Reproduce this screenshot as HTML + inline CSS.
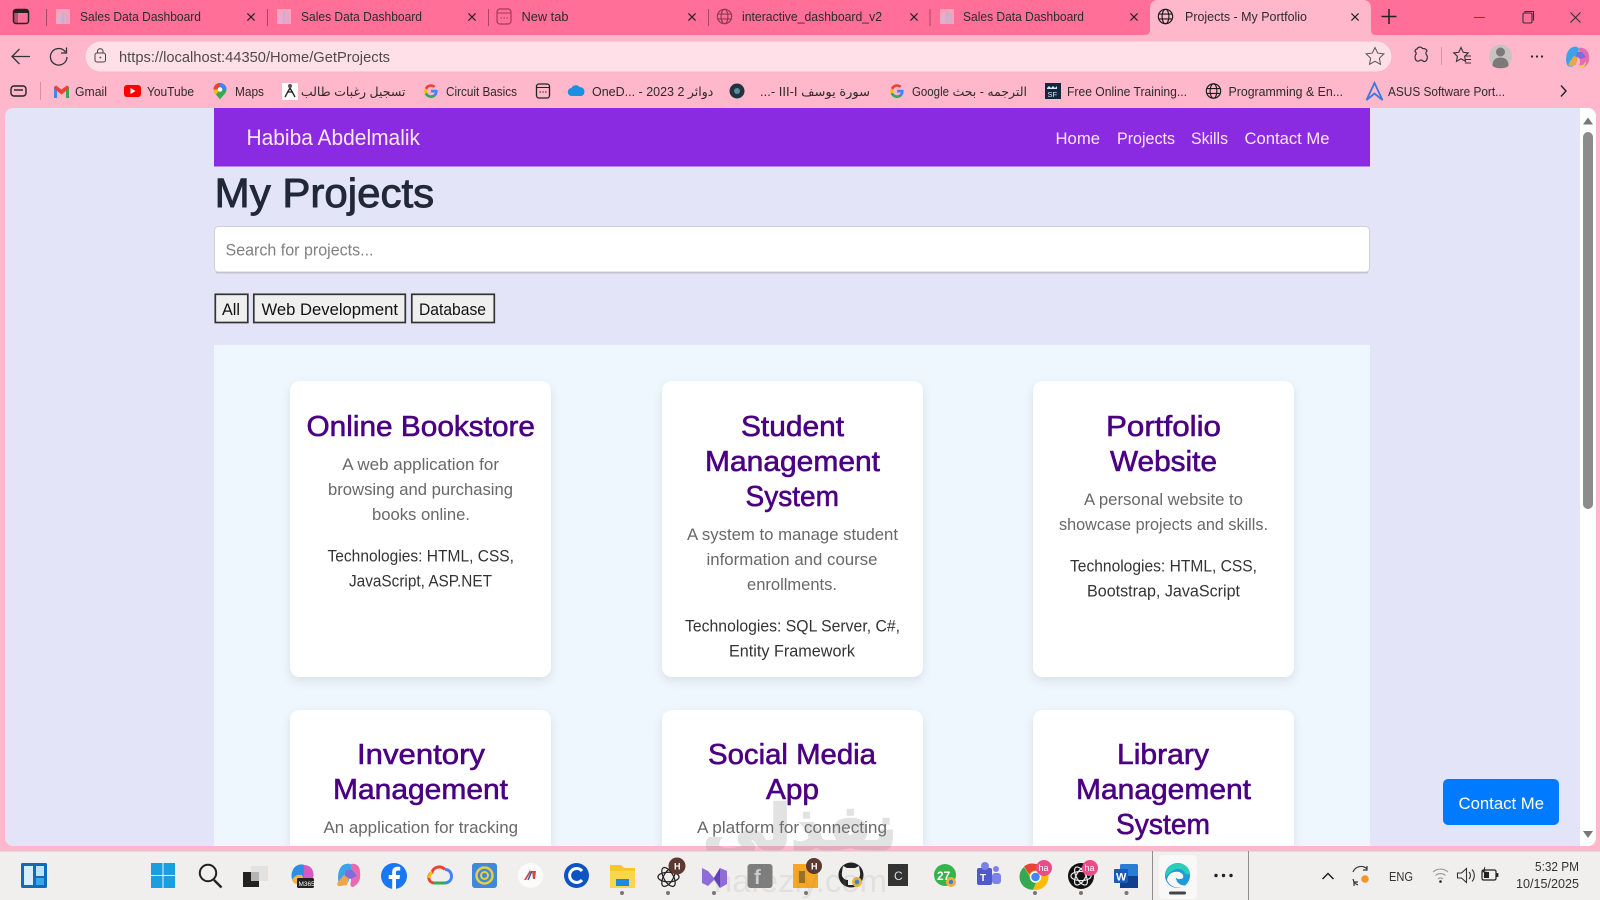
<!DOCTYPE html>
<html lang="en"><head><meta charset="utf-8"><title>Projects - My Portfolio</title>
<style>
html,body{margin:0;padding:0;width:1600px;height:900px;overflow:hidden;background:#f0efee}
svg{display:block;font-family:"Liberation Sans","DejaVu Sans",sans-serif}
.t{font-size:12.5px;fill:#2e2a2c}
.b{font-size:12.5px;fill:#2e2a2c}
.h{font-size:28.5px;fill:#4b0082;stroke:#4b0082;stroke-width:.6}
.p{font-size:16.5px;fill:#686868}
.k{font-size:16.5px;fill:#333}
.n{font-size:17px;fill:#fde6f6}
.s{font-size:17px;fill:#111}
.dot{fill:#777}
</style></head><body>
<svg width="1600" height="900" viewBox="0 0 1600 900" xmlns="http://www.w3.org/2000/svg">
<defs>
<clipPath id="vp"><rect x="5" y="108" width="1591" height="738" rx="8"/></clipPath>
<filter id="sh" x="-10%" y="-10%" width="120%" height="120%"><feDropShadow dx="0" dy="4" stdDeviation="5" flood-color="#000" flood-opacity=".09"/></filter>
<symbol id="sales" viewBox="0 0 14 16"><rect x="0" y="1" width="14" height="15" fill="#f7b9cd" opacity=".7"/><rect x="2" y="9" width="2.5" height="7" fill="#d2b4dc"/><rect x="6" y="3" width="2.5" height="13" fill="#c4b0dc"/><rect x="10" y="6" width="2.5" height="10" fill="#dba8c8"/></symbol>
<symbol id="globe" viewBox="0 0 18 18"><g fill="none" stroke="currentColor" stroke-width="1.2"><circle cx="9" cy="9" r="7.6"/><ellipse cx="9" cy="9" rx="3.6" ry="7.6"/><path d="M1.6 6.4h14.8M1.6 11.6h14.8"/></g></symbol>
<symbol id="x" viewBox="0 0 10 10"><path d="M1 1l8 8M9 1l-8 8" stroke="#222" stroke-width="1.3" fill="none"/></symbol>
<symbol id="gg" viewBox="0 0 16 16"><path d="M14.6 8.2c0-.5 0-1-.1-1.4H8v2.7h3.7c-.2.9-.6 1.6-1.4 2.1v1.7h2.2c1.3-1.2 2.1-3 2.1-5.1z" fill="#4285f4"/><path d="M8 15c1.9 0 3.400-.6 4.500-1.700l-2.200-1.700c-.6.4-1.400.7-2.300.7-1.800 0-3.300-1.200-3.800-2.800H1.900v1.800C3 13.500 5.300 15 8 15z" fill="#34a853"/><path d="M4.200 9.500c-.3-.9-.3-1.800 0-2.700V5H1.900c-.9 1.900-.9 4.100 0 6z" fill="#fbbc05"/><path d="M8 3.900c1 0 1.900.3 2.600 1l1.900-1.900C11.400 1.900 9.800 1.200 8 1.200 5.300 1.200 3 2.700 1.900 5l2.300 1.800C4.700 5.100 6.200 3.900 8 3.900z" fill="#ea4335"/></symbol>
<symbol id="gpt" viewBox="0 0 24 24"><g fill="none" stroke="currentColor" stroke-width="1.300"><ellipse cx="12" cy="12" rx="11" ry="5" /><ellipse cx="12" cy="12" rx="11" ry="5" transform="rotate(60 12 12)"/><ellipse cx="12" cy="12" rx="11" ry="5" transform="rotate(120 12 12)"/></g></symbol>
</defs>

<!-- chrome backgrounds -->
<rect width="1600" height="36" fill="#ff6f97"/>
<rect y="35" width="1600" height="816" fill="#ffb7cc"/>
<path d="M1145 35c4 0 5-2 5-6V8c0-5 3-8 8-8h205c5 0 8 3 8 8v21c0 4 1 6 5 6z" fill="#ffb7cc"/>

<!-- tab strip -->
<rect x="13.500" y="9.500" width="15" height="14" rx="2.500" fill="none" stroke="#222" stroke-width="1.500"/><rect x="14" y="10" width="14" height="3" fill="#222"/><rect x="14" y="10" width="4" height="13" fill="#222" opacity=".35"/>
<path d="M46.500 9v17M267.500 9v17M488.500 9v17M708.500 9v17M930 9v17" stroke="#a8475f" stroke-width="1"/>
<use href="#sales" x="56" y="8" width="14" height="16"/><use href="#sales" x="277" y="8" width="14" height="16"/><use href="#sales" x="940" y="8" width="14" height="16"/>
<rect x="497" y="9" width="14" height="15" rx="3" fill="none" stroke="#a23b5a" stroke-width="1.200"/><path d="M497 13h14" stroke="#a23b5a"/><path d="M500.500 18h1.500M503.500 18h1.500M506.500 18h1.500" stroke="#a23b5a"/>
<use href="#globe" x="716" y="8" width="17" height="17" color="#8a3a52"/><use href="#globe" x="1157" y="8" width="17" height="17" color="#1a1a1a"/>
<text class="t" x="80" y="21" textLength="121" lengthAdjust="spacingAndGlyphs">Sales Data Dashboard</text>
<text class="t" x="301" y="21" textLength="121" lengthAdjust="spacingAndGlyphs">Sales Data Dashboard</text>
<text class="t" x="521.500" y="21" textLength="47" lengthAdjust="spacingAndGlyphs">New tab</text>
<text class="t" x="742" y="21" textLength="140" lengthAdjust="spacingAndGlyphs">interactive_dashboard_v2</text>
<text class="t" x="963" y="21" textLength="121" lengthAdjust="spacingAndGlyphs">Sales Data Dashboard</text>
<text class="t" x="1185" y="21" textLength="122" lengthAdjust="spacingAndGlyphs">Projects - My Portfolio</text>
<use href="#x" x="246.500" y="12.500" width="9" height="9"/><use href="#x" x="467.500" y="12.500" width="9" height="9"/><use href="#x" x="687.500" y="12.500" width="9" height="9"/><use href="#x" x="909.500" y="12.500" width="9" height="9"/><use href="#x" x="1129.500" y="12.500" width="9" height="9"/><use href="#x" x="1350.500" y="12.500" width="9" height="9"/>
<path d="M1389 9v15M1381.500 16.500h15" stroke="#222" stroke-width="1.500"/>
<path d="M1474 17.500h11" stroke="#553" stroke-width="1.100"/>
<rect x="1523" y="13" width="9" height="10" rx="1.500" fill="none" stroke="#333" stroke-width="1.100"/><path d="M1525 13v-1.500h8.500v9" fill="none" stroke="#333" stroke-width="1.100"/>
<path d="M1570.500 12.500l10 10M1580.500 12.500l-10 10" stroke="#333" stroke-width="1.100"/>

<!-- toolbar -->
<path d="M30 56.500H12M19.500 49l-7.500 7.500 7.500 7.500" fill="none" stroke="#333" stroke-width="1.300"/>
<path d="M65.500 52a8.300 8.300 0 1 0 1.500 5M66.500 47.500v5.500h-5.500" fill="none" stroke="#333" stroke-width="1.300"/>
<rect x="85" y="41" width="1307" height="31" rx="15.500" fill="#ffe0e8" stroke="#f2b9c8"/>
<rect x="95" y="53" width="10.500" height="9" rx="2" fill="none" stroke="#444" stroke-width="1"/><path d="M97.500 53v-2a2.800 2.800 0 0 1 5.500 0v2" fill="none" stroke="#444" stroke-width="1"/><circle cx="100.300" cy="57.500" r=".9" fill="#444"/>
<text x="119" y="62" font-size="15" fill="#4f4a4c" textLength="271" lengthAdjust="spacingAndGlyphs">https://localhost:44350/Home/GetProjects</text>
<path d="M1375 47.500l2.700 5.600 6.200.8-4.500 4.300 1.100 6.100-5.500-3-5.500 3 1.100-6.100-4.500-4.300 6.200-.8z" fill="none" stroke="#555" stroke-width="1"/>
<path d="M1417 49.500a3 3 0 0 1 5.500-1c2 0 4 .5 4.500 2.500-1.500 1-1.500 3 0 4.500 1 2 0 5-2 6-2 .5-2.500-1.500-4-1.500s-2 2-4 1c-2-1-2.500-4-1.500-6 1-1 1-2.500-.5-3.500.2-1.500 1-2.500 2-2.500z" fill="none" stroke="#333" stroke-width="1.200"/>
<path d="M1441.500 47v18" stroke="#d990a6"/>
<path d="M1461 47.500l2.200 4.800 5 .6-3.600 3.400.9 5-4.500-2.500-4.500 2.500.9-5-3.600-3.400 5-.6z" fill="none" stroke="#333" stroke-width="1.100"/><path d="M1465 56h6M1465 59.500h6M1465 63h6" stroke="#333" stroke-width="1"/>
<ellipse cx="1500.500" cy="56.500" rx="11.500" ry="12" fill="#c9c2c3"/><circle cx="1500.500" cy="52" r="4.500" fill="#7d797a"/><path d="M1492.500 66c0-6 3-8.500 8-8.500s8 2.500 8 8.500c-4 3-12 3-16 0z" fill="#7d797a"/>
<circle cx="1532" cy="56.500" r="1.100" fill="#222"/><circle cx="1537" cy="56.500" r="1.100" fill="#222"/><circle cx="1542" cy="56.500" r="1.100" fill="#222"/>
<path d="M1571 48c3-2 7-2 8 1l-3 13c-1 4-5 6-8 4-3-3-3-14 3-18z" fill="#3ca3e8"/><path d="M1579 48c5-1 9 2 10 7 1 6-1 11-7 13-3 0-3-3-2-5z" fill="#e96ab1"/><path d="M1572 66c-3 1-4-1-3-3l5-7 4 2-2 7z" fill="#f0a54a"/><path d="M1577 52h5l4 5-6 2-4-3z" fill="#7f6be0"/><path d="M1578 66l5-1 3-4c0 4-2 7-6 7z" fill="#f5cf4a"/>

<!-- bookmarks -->
<rect x="11" y="86" width="15" height="10" rx="3" fill="none" stroke="#222" stroke-width="1.400"/><path d="M14 90h9" stroke="#222" stroke-width="1.400"/>
<path d="M40.500 82v18" stroke="#d990a6"/>
<path d="M54 87v11h3v-7l4.500 3.500 4.500-3.500v7h3V87l-2-1.500-5.500 4-5.500-4z" fill="#ea4335"/><path d="M54 98h3v-7l-3-3z" fill="#4285f4"/><path d="M66 98h3V88l-3 3z" fill="#34a853"/>
<text class="b" x="75" y="96" textLength="32" lengthAdjust="spacingAndGlyphs">Gmail</text>
<rect x="124" y="85" width="17" height="12" rx="3" fill="#f00"/><path d="M130.500 88v6l5-3z" fill="#fff"/>
<text class="b" x="147" y="96" textLength="47" lengthAdjust="spacingAndGlyphs">YouTube</text>
<path d="M220 83a6.500 6.500 0 0 1 6.500 6.500c0 4-4 6-6.500 10-2.500-4-6.500-6-6.500-10A6.500 6.500 0 0 1 220 83z" fill="#34a853"/><path d="M220 83a6.500 6.500 0 0 1 6.500 6.500l-6.500 0z" fill="#4285f4"/><path d="M213.500 89.500A6.500 6.500 0 0 1 220 83v6.500z" fill="#ea4335"/><path d="M213.500 89.500c0 2 1 3.500 2.500 5l4-5z" fill="#fbbc05"/><circle cx="220" cy="89.500" r="2.300" fill="#fff"/>
<text class="b" x="235" y="96" textLength="29" lengthAdjust="spacingAndGlyphs">Maps</text>
<rect x="282" y="83" width="16" height="17" fill="#fff"/><circle cx="290" cy="86" r="2" fill="#555"/><path d="M290 88l-5 9M290 88l5 9M287 92h6" stroke="#222" stroke-width="1.300" fill="none"/>
<text class="b" x="405.500" y="96" text-anchor="end">تسجيل رغبات طالب</text>
<use href="#gg" x="423" y="83" width="16" height="16"/>
<text class="b" x="446" y="96" textLength="71" lengthAdjust="spacingAndGlyphs">Circuit Basics</text>
<rect x="536.500" y="84" width="13" height="14" rx="2.500" fill="none" stroke="#222" stroke-width="1.300"/><path d="M536.500 87.500h13M539.500 92h1.500M542.300 92h1.500M545 92h1.500" stroke="#222"/>
<path d="M572 96a4 4 0 0 1-.5-8c1-3 6-4 8-1 3 0 5 2 5 4.500S583 96 581 96z" fill="#1b8fe0"/>
<text class="b" x="592" y="96">OneD... - دوائر 2 2023</text>
<circle cx="737" cy="91" r="7.500" fill="#20343f"/><circle cx="737" cy="91" r="3" fill="#5d8a9c"/>
<text class="b" x="760" y="96" textLength="110" lengthAdjust="spacingAndGlyphs">...- III-I سورة يوسف</text>
<use href="#gg" x="889" y="83" width="16" height="16"/>
<text class="b" x="912" y="96" textLength="37" lengthAdjust="spacingAndGlyphs">Google</text>
<text class="b" x="1027" y="96" style="direction:rtl;text-anchor:start">الترجمه - بحث</text>
<rect x="1045" y="83" width="16" height="16" fill="#10283f"/><text x="1047.500" y="97" font-size="7.500" fill="#dfe6ee">SF</text><path d="M1047 88l2-2 2 2 2-2 2 2 2-2v3h-10z" fill="#dfe6ee"/>
<text class="b" x="1067" y="96" textLength="120" lengthAdjust="spacingAndGlyphs">Free Online Training...</text>
<use href="#globe" x="1205" y="82.500" width="17" height="17" color="#1a1a1a"/>
<text class="b" x="1228.500" y="96" textLength="114.500" lengthAdjust="spacingAndGlyphs">Programming &amp; En...</text>
<path d="M1374.500 83l-8 17 8-6.500 8 6.500z" fill="none" stroke="#3b78e0" stroke-width="1.800"/>
<text class="b" x="1388" y="96" textLength="117" lengthAdjust="spacingAndGlyphs">ASUS Software Port...</text>
<path d="M1561 85.500l5 5.500-5 5.500" fill="none" stroke="#222" stroke-width="1.400"/>

<!-- page viewport -->
<g clip-path="url(#vp)">
<rect x="5" y="108" width="1591" height="738" fill="#e4e4f8"/>
<rect x="1580" y="108" width="16" height="738" fill="#fff"/>
<rect x="1583" y="132" width="10" height="377" rx="5" fill="#8c8c8c"/>
<path d="M1588 117.500l5 7h-10z" fill="#777"/><path d="M1588 838l5-7h-10z" fill="#777"/>

<rect x="214" y="108" width="1156" height="58.500" fill="#8a2be2"/>
<text x="246.500" y="145" font-size="22" fill="#fde6f6" textLength="173.500" lengthAdjust="spacingAndGlyphs">Habiba Abdelmalik</text>
<text class="n" x="1055.500" y="144" textLength="44.500" lengthAdjust="spacingAndGlyphs">Home</text>
<text class="n" x="1117" y="144" textLength="58" lengthAdjust="spacingAndGlyphs">Projects</text>
<text class="n" x="1191" y="144" textLength="37" lengthAdjust="spacingAndGlyphs">Skills</text>
<text class="n" x="1244.500" y="144" textLength="85" lengthAdjust="spacingAndGlyphs">Contact Me</text>

<text x="214.700" y="207" font-size="41" fill="#212837" stroke="#212837" stroke-width=".9" textLength="219.500" lengthAdjust="spacingAndGlyphs">My Projects</text>

<rect x="214.500" y="226.500" width="1155" height="45.500" rx="4" fill="#fff" stroke="#cfcfd5"/>
<path d="M216 272.800h1152" stroke="#bdbdc4" stroke-width="1.200"/>
<text x="225.500" y="255.500" font-size="17" fill="#808080" textLength="148" lengthAdjust="spacingAndGlyphs">Search for projects...</text>

<g fill="#efefef" stroke="#333" stroke-width="1.700"><rect x="215.300" y="294.300" width="32.500" height="28.200"/><rect x="253.800" y="294.300" width="151.500" height="28.200"/><rect x="411.800" y="294.300" width="82.500" height="28.200"/></g>
<text class="s" x="222" y="315" textLength="18" lengthAdjust="spacingAndGlyphs">All</text>
<text class="s" x="261.500" y="315" textLength="136.500" lengthAdjust="spacingAndGlyphs">Web Development</text>
<text class="s" x="419" y="315" textLength="67" lengthAdjust="spacingAndGlyphs">Database</text>

<rect x="214" y="345" width="1156" height="501" fill="#eef6fe"/>

<g fill="#fff" filter="url(#sh)">
<rect x="290" y="381" width="261" height="296" rx="10"/><rect x="662" y="381" width="261" height="296" rx="10"/><rect x="1033" y="381" width="261" height="296" rx="10"/>
<rect x="290" y="710" width="261" height="170" rx="10"/><rect x="662" y="710" width="261" height="170" rx="10"/><rect x="1033" y="710" width="261" height="170" rx="10"/>
</g>

<!-- card 1 -->
<text class="h" x="306.500" y="436" textLength="228.500" lengthAdjust="spacingAndGlyphs">Online Bookstore</text>
<text class="p" x="342.300" y="470" textLength="156.700" lengthAdjust="spacingAndGlyphs">A web application for</text>
<text class="p" x="328" y="495" textLength="185" lengthAdjust="spacingAndGlyphs">browsing and purchasing</text>
<text class="p" x="372" y="520" textLength="98" lengthAdjust="spacingAndGlyphs">books online.</text>
<text class="k" x="327.500" y="561.300" textLength="186.500" lengthAdjust="spacingAndGlyphs">Technologies: HTML, CSS,</text>
<text class="k" x="349" y="586.300" textLength="143" lengthAdjust="spacingAndGlyphs">JavaScript, ASP.NET</text>
<!-- card 2 -->
<text class="h" x="741" y="436" textLength="103" lengthAdjust="spacingAndGlyphs">Student</text>
<text class="h" x="705" y="471" textLength="175" lengthAdjust="spacingAndGlyphs">Management</text>
<text class="h" x="745.500" y="506" textLength="93.500" lengthAdjust="spacingAndGlyphs">System</text>
<text class="p" x="687" y="540" textLength="211" lengthAdjust="spacingAndGlyphs">A system to manage student</text>
<text class="p" x="706.500" y="565" textLength="171" lengthAdjust="spacingAndGlyphs">information and course</text>
<text class="p" x="747" y="590" textLength="90" lengthAdjust="spacingAndGlyphs">enrollments.</text>
<text class="k" x="685" y="631.300" textLength="215" lengthAdjust="spacingAndGlyphs">Technologies: SQL Server, C#,</text>
<text class="k" x="729" y="656.300" textLength="126" lengthAdjust="spacingAndGlyphs">Entity Framework</text>
<!-- card 3 -->
<text class="h" x="1106" y="436" textLength="115" lengthAdjust="spacingAndGlyphs">Portfolio</text>
<text class="h" x="1110" y="471" textLength="107" lengthAdjust="spacingAndGlyphs">Website</text>
<text class="p" x="1084" y="505" textLength="159" lengthAdjust="spacingAndGlyphs">A personal website to</text>
<text class="p" x="1059" y="530" textLength="209" lengthAdjust="spacingAndGlyphs">showcase projects and skills.</text>
<text class="k" x="1070" y="571.300" textLength="187" lengthAdjust="spacingAndGlyphs">Technologies: HTML, CSS,</text>
<text class="k" x="1087" y="596.300" textLength="153" lengthAdjust="spacingAndGlyphs">Bootstrap, JavaScript</text>
<!-- card 4 -->
<text class="h" x="357" y="764" textLength="128" lengthAdjust="spacingAndGlyphs">Inventory</text>
<text class="h" x="333" y="799" textLength="175" lengthAdjust="spacingAndGlyphs">Management</text>
<text class="p" x="323.500" y="833" textLength="194.500" lengthAdjust="spacingAndGlyphs">An application for tracking</text>
<text class="p" x="330" y="858" textLength="180" lengthAdjust="spacingAndGlyphs">inventory levels and orders</text>
<!-- card 5 -->
<text class="h" x="708" y="764" textLength="168" lengthAdjust="spacingAndGlyphs">Social Media</text>
<text class="h" x="766" y="799" textLength="53" lengthAdjust="spacingAndGlyphs">App</text>
<text class="p" x="697" y="833" textLength="190" lengthAdjust="spacingAndGlyphs">A platform for connecting</text>
<text class="p" x="705" y="858" textLength="175" lengthAdjust="spacingAndGlyphs">users and sharing content</text>
<!-- card 6 -->
<text class="h" x="1117" y="764" textLength="92" lengthAdjust="spacingAndGlyphs">Library</text>
<text class="h" x="1076" y="799" textLength="175" lengthAdjust="spacingAndGlyphs">Management</text>
<text class="h" x="1116" y="834" textLength="94" lengthAdjust="spacingAndGlyphs">System</text>

<rect x="1443" y="779" width="116" height="46" rx="5" fill="#007bff"/>
<text x="1458.500" y="809" font-size="17" fill="#fff" textLength="85.500" lengthAdjust="spacingAndGlyphs">Contact Me</text>
</g>

<!-- watermark -->
<text x="703" y="849" font-size="62" font-weight="bold" fill="#8a8a8a" stroke="#8a8a8a" stroke-width="2.500" opacity=".24" textLength="194" lengthAdjust="spacingAndGlyphs" style="font-family:'DejaVu Sans',sans-serif">نفذلي</text>

<!-- taskbar -->
<rect y="851" width="1600" height="49" fill="#f0efee"/>
<path d="M0 851h1600" stroke="#d9c6cc"/>
<path d="M1152.500 851v49M1248.500 851v49" stroke="#8d8d8d" stroke-width="1"/>
<rect x="1159" y="855" width="38" height="44" rx="4" fill="#f8f8f8"/>

<rect x="21" y="863" width="26" height="25" rx="1.500" fill="#0f6cbd"/><rect x="24" y="866" width="9" height="19" fill="#d8eefc"/><rect x="36" y="866" width="8" height="10" fill="#bfe3fa"/><rect x="36" y="878" width="8" height="7" fill="#35a7ee"/>
<g fill="#1b9de2"><rect x="151" y="863" width="11.500" height="12"/><rect x="163.500" y="863" width="11.500" height="12"/><rect x="151" y="876" width="11.500" height="12"/><rect x="163.500" y="876" width="11.500" height="12"/></g>
<circle cx="208" cy="873" r="8.200" fill="none" stroke="#222" stroke-width="2"/><path d="M214 880l7.500 7.500" stroke="#222" stroke-width="2.400"/>
<rect x="243" y="872" width="16" height="15" fill="#222"/><rect x="251" y="866" width="17" height="15" fill="#e2e2e2"/><rect x="251" y="872" width="8" height="9" fill="#b5b5b5"/>
<path d="M296 866c5-3 10-2 11 3l-3 11c-1 4-8 5-11 1-3-5-1-12 3-15z" fill="#2f8de4"/><path d="M304 865c5 0 9 3 9.500 9 .3 5-3 8-7 9l-3-1z" fill="#d75ac1"/><path d="M292 880c2-4 6-6 10-5l2 5-5 4c-3 1-6-1-7-4z" fill="#f5b342"/><rect x="297" y="878" width="17" height="10" rx="1.500" fill="#222"/><text x="298.500" y="886" font-size="6.500" fill="#fff">M365</text>
<path d="M343 865c4-2 8-2 9 1l-3 14c-1 4-6 7-9 5-3-3-3-16 3-20z" fill="#3ca3e8"/><path d="M351 864c5-1 9 2 9 8 1 7-1 12-7 15-3 0-3-3-2-6z" fill="#e96ab1"/><path d="M340 886c-2 1-4-2-2-4l6-7 5 2-2 8z" fill="#f0a54a"/><path d="M346 870h6l5 6-7 3-5-3z" fill="#7f6be0"/>
<circle cx="394" cy="876" r="13" fill="#1877f2"/><path d="M396 889v-10h3.500l.6-4H396v-2.500c0-1.200.5-2 2-2h2.200v-3.500c-3.800-.7-8 0-8 5V875h-3.500v4h3.500v10z" fill="#fff"/>
<path d="M434 883a5.500 5.500 0 0 1-2-10.500c1-5 8-8 13-3" fill="none" stroke="#ea4335" stroke-width="3"/><path d="M434 883h11" stroke="#34a853" stroke-width="3"/><path d="M445 883c3 0 6.500-2.500 6.500-6.500s-2.500-7-6.500-7" fill="none" stroke="#4285f4" stroke-width="3"/><path d="M429 878c.5-3 1.500-5 3-6" stroke="#fbbc05" stroke-width="3" fill="none"/>
<rect x="472" y="863" width="25" height="25" rx="3" fill="#4088d8"/><circle cx="484.500" cy="875.500" r="8" fill="none" stroke="#e8cf3d" stroke-width="2.500"/><circle cx="484.500" cy="875.500" r="3.500" fill="none" stroke="#e8cf3d" stroke-width="2"/>
<circle cx="530.500" cy="875.500" r="12.500" fill="#fbfbfb"/><path d="M524 880l6-10 1 2-5 8zM532 871h4l-1 8-2 0z" fill="#d44"/><path d="M528 880l4-9" stroke="#2866b8" stroke-width="1.500"/>
<circle cx="576.500" cy="875.500" r="12.500" fill="#0c54c2"/><path d="M582 871a7 7 0 1 0 0 9" fill="none" stroke="#fff" stroke-width="3"/>
<path d="M610 865h11l3 3h11v20h-25z" fill="#f7c62f"/><rect x="610" y="871" width="25" height="17" fill="#fbd64b"/><rect x="616" y="879" width="13" height="7" fill="#1b8ae0"/>
<use href="#gpt" x="657" y="865" width="23" height="24" color="#222"/><circle cx="677" cy="866" r="8.500" fill="#5c3a33"/><text x="674" y="869.500" font-size="9" font-weight="bold" fill="#fff">H</text>
<path d="M702 868l6 3 6 7 6-10 7 3v13l-7 4-6-8-6 6-6-3z" fill="#8f6cd8"/><path d="M714 878l6-10v20z" fill="#5c3bbd"/>
<rect x="747.500" y="864" width="25" height="24" rx="3" fill="#7d7d7d"/><text x="754" y="884" font-size="20" font-weight="bold" fill="#cfcfcf">f</text>
<rect x="793" y="864" width="25" height="24" fill="#f7a823"/><circle cx="814" cy="866" r="8" fill="#5c3a33"/><text x="811" y="869.500" font-size="9" font-weight="bold" fill="#fff">H</text><rect x="799" y="871" width="6" height="12" fill="#5a4a20" opacity=".6"/>
<circle cx="851" cy="875" r="12.500" fill="#222"/><path d="M842 872l1-6 4 2h8l4-2 1 6c1 5-2 8-6 8v5h-6v-5c-4 0-7-3-6-8z" fill="#f0efee"/><circle cx="857" cy="882" r="5" fill="#e8b23c"/><circle cx="857" cy="882" r="2.300" fill="#3a7fe0"/>
<rect x="888" y="864" width="20" height="22" fill="#333"/><text x="894" y="880" font-size="12" fill="#ddd">C</text>
<circle cx="945" cy="875" r="11" fill="#34b44a"/><text x="937" y="880" font-size="12" font-weight="bold" fill="#fff">27</text><circle cx="951" cy="882" r="5" fill="#e8b23c"/><circle cx="951" cy="882" r="2.200" fill="#3a7fe0"/>
<rect x="977" y="868" width="15" height="17" rx="2" fill="#5059c9"/><circle cx="985" cy="866" r="4" fill="#7b83eb"/><circle cx="996" cy="869" r="3" fill="#7b83eb"/><rect x="992" y="873" width="9" height="11" rx="3" fill="#7b83eb"/><text x="980" y="881" font-size="10" font-weight="bold" fill="#fff">T</text>
<circle cx="1035.500" cy="877" r="13" fill="#fbbc05"/><path d="M1035.500 864a13 13 0 0 1 11.300 6.500H1035.500a6.500 6.500 0 0 0-6 4l-5.500-8a13 13 0 0 1 11.500-2.500z" fill="#ea4335"/><path d="M1024 867l6 10a6.500 6.500 0 0 0 7 3l-4 9.800A13 13 0 0 1 1024 867z" fill="#34a853"/><circle cx="1035.500" cy="877" r="5" fill="#4285f4" stroke="#fff" stroke-width="1.500"/><circle cx="1044" cy="868" r="8" fill="#ea4c89"/><text x="1038.500" y="871" font-size="9" fill="#fff">ha</text>
<circle cx="1081" cy="876" r="13" fill="#111"/><use href="#gpt" x="1070" y="865" width="22" height="22" color="#eee"/><circle cx="1090" cy="868" r="8" fill="#ea4c89"/><text x="1084.500" y="871" font-size="9" fill="#fff">ha</text>
<rect x="1120" y="864" width="18" height="24" rx="1.500" fill="#2b7cd3"/><rect x="1120" y="876" width="18" height="12" fill="#103f91"/><rect x="1114" y="869" width="14" height="14" rx="1" fill="#185abd"/><text x="1116" y="880.500" font-size="11" font-weight="bold" fill="#fff">W</text>
<circle cx="1177.500" cy="875.500" r="12.500" fill="#1f9bd8"/><path d="M1167 880c1-7 7-9 12-8 3 1 5 3 4 6-3 2-6 1-7-.5 0 5 4 8 9 8-3 3-14 4-18-5.500z" fill="#f8f8f8"/><path d="M1166 877c-1-8 5-14 12-14 6 0 11 4 12 10-1 2-3 2-5 0-2-4-7-5-11-3-4 2-6 4-8 7z" fill="#2ecdb8"/>
<rect x="1169" y="891.500" width="17" height="3" rx="1.500" fill="#444"/>
<circle cx="1216" cy="875.500" r="1.700" fill="#222"/><circle cx="1223.500" cy="875.500" r="1.700" fill="#222"/><circle cx="1231" cy="875.500" r="1.700" fill="#222"/>
<g class="dot"><circle cx="622" cy="893" r="2"/><circle cx="668" cy="893" r="2"/><circle cx="714" cy="893" r="2"/><circle cx="806" cy="893" r="2"/><circle cx="1035" cy="893" r="2"/><circle cx="1081" cy="893" r="2"/><circle cx="1126.500" cy="893" r="2"/></g>

<text x="714" y="892" font-size="32" fill="#8a8a8a" opacity=".14" textLength="173" lengthAdjust="spacingAndGlyphs">nafezly.com</text>

<!-- tray -->
<path d="M1322.500 879l5.500-5.500 5.500 5.500" fill="none" stroke="#222" stroke-width="1.500"/>
<path d="M1353 872a8.500 8.500 0 0 1 14-3M1367 866v4h-4M1353 879a8 8 0 0 0 5 6M1354 886v-4h4" fill="none" stroke="#333" stroke-width="1.200"/><circle cx="1365" cy="879" r="3.800" fill="#f7941d"/>
<text x="1389" y="881" font-size="12.500" fill="#333" textLength="24" lengthAdjust="spacingAndGlyphs">ENG</text>
<path d="M1433 872a11 11 0 0 1 15 0M1435.500 875.500a7.500 7.500 0 0 1 10 0M1438 879a3.500 3.500 0 0 1 5 0" fill="none" stroke="#9a9a9a" stroke-width="1.100"/><circle cx="1440.500" cy="881.500" r="1.300" fill="#222"/>
<path d="M1457.500 873h4l5-4.500v14l-5-4.500h-4zM1469 872a5 5 0 0 1 0 7M1472 869.500a9 9 0 0 1 0 12" fill="none" stroke="#333" stroke-width="1.100"/>
<rect x="1482" y="870" width="14" height="10" rx="1.500" fill="none" stroke="#222" stroke-width="1.200"/><rect x="1484" y="872" width="5" height="6" fill="#222"/><path d="M1496.500 873.500h1.500v3h-1.500zM1485 867l-2 5h3l-2 5" stroke="#222" fill="#222" stroke-width=".8"/>
<text x="1535" y="871" font-size="12.500" fill="#333" textLength="44" lengthAdjust="spacingAndGlyphs">5:32 PM</text>
<text x="1516" y="888" font-size="12.500" fill="#333" textLength="63" lengthAdjust="spacingAndGlyphs">10/15/2025</text>
</svg>
</body></html>
